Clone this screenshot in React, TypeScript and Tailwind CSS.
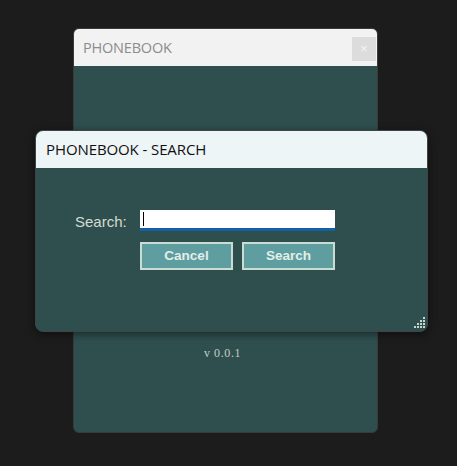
import React from "react";

export default function App() {
  return (
    <div className="relative w-[457px] h-[466px] bg-[#1c1c1c] overflow-hidden">
      {/* background window */}
      <div className="absolute left-[73px] top-[28px] w-[305px] h-[405px] rounded-[6px] border border-[#3a3a3a] bg-[#2f4f4f] flex flex-col overflow-hidden">
        <div className="relative h-[37px] bg-[#f2f2f2] flex items-center pl-[9px]">
          <span className="text-[14.5px] text-[#8c8c8c] font-['Open_Sans',sans-serif] tracking-[-0.2px]">PHONEBOOK</span>
          <div className="absolute right-[1px] top-[8px] w-[24px] h-[24px] bg-[#dcdcdc] flex items-center justify-center text-[#f4f4f4] text-[13px] font-['Liberation_Sans',sans-serif]">×</div>
        </div>
        <div className="flex-1 flex flex-col items-center">
          <div className="mt-[278px] mr-[6px] text-[12px] text-[#c6cdc6] font-['Liberation_Serif',serif] tracking-[0.6px]">v 0.0.1</div>
        </div>
      </div>

      {/* dialog */}
      <div className="absolute left-[35px] top-[130px] w-[393px] h-[202px] rounded-[8px] border border-[#3c4646] bg-[#2f4f4f] flex flex-col overflow-hidden shadow-[0_2px_8px_rgba(0,0,0,0.5)]">
        <div className="h-[37px] bg-[#eef5f7] flex items-center pl-[10px]">
          <span className="text-[15px] text-[#111] font-['Open_Sans',sans-serif] tracking-[-0.1px]">PHONEBOOK - SEARCH</span>
        </div>
        <div className="relative flex-1 pt-[42px] pl-[104px]">
          <div className="flex items-center">
            <span className="absolute left-[39px] top-[43px] text-[15px] text-[#d6dcd0] font-['Liberation_Sans',sans-serif]">Search:</span>
            <div className="w-[195px] h-[21px] bg-white border-b-[3px] border-[#1460a8] flex items-center pl-[3px]">
              <div className="w-[1px] h-[14px] bg-black" />
            </div>
          </div>
          <div className="flex gap-[9px] mt-[11px]">
            <div className="w-[93px] h-[28px] bg-[#5f9ea0] border-2 border-[#c9ddd2] flex items-center justify-center text-[13.5px] font-bold text-[#e2eee8] font-['Liberation_Sans',sans-serif]">Cancel</div>
            <div className="w-[93px] h-[28px] bg-[#5f9ea0] border-2 border-[#c9ddd2] flex items-center justify-center text-[13.5px] font-bold text-[#e2eee8] font-['Liberation_Sans',sans-serif]">Search</div>
          </div>
          <svg className="absolute right-[1px] bottom-[2px]" width="12" height="12" viewBox="0 0 12 12">
            <g fill="#c8d4d0">
              <rect x="9" y="0" width="2" height="2" />
              <rect x="6" y="3" width="2" height="2" />
              <rect x="9" y="3" width="2" height="2" />
              <rect x="3" y="6" width="2" height="2" />
              <rect x="6" y="6" width="2" height="2" />
              <rect x="9" y="6" width="2" height="2" />
              <rect x="0" y="9" width="2" height="2" />
              <rect x="3" y="9" width="2" height="2" />
              <rect x="6" y="9" width="2" height="2" />
              <rect x="9" y="9" width="2" height="2" />
            </g>
          </svg>
        </div>
      </div>
    </div>
  );
}
